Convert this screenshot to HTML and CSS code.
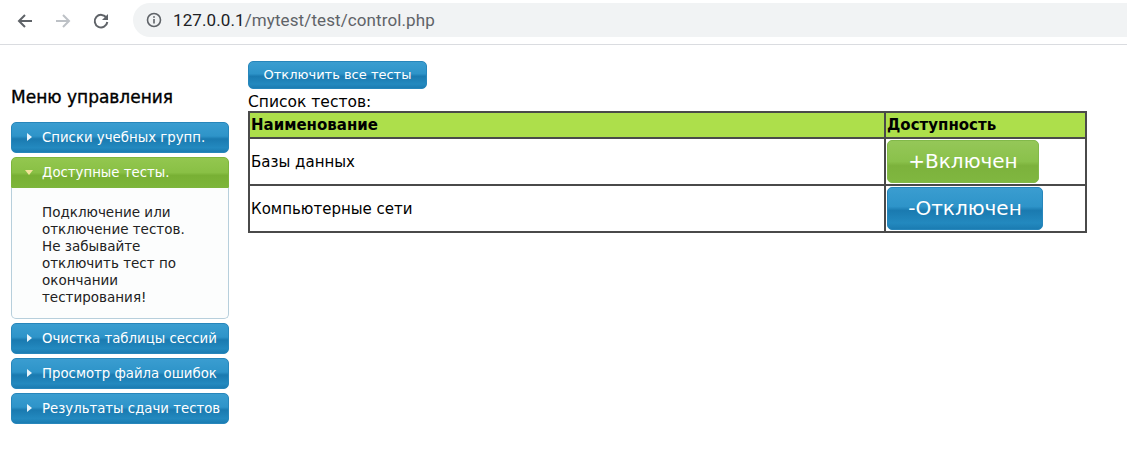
FILE: index.html
```html
<!DOCTYPE html>
<html lang="ru">
<head>
<meta charset="utf-8">
<title>control</title>
<link rel="stylesheet" href="styles.css">
</head>
<body>
<div class="chrome">
  <div class="nav">
    <svg class="ico" width="20" height="20" viewBox="0 0 20 20"><path d="M17 10H4M10 4l-6 6 6 6" fill="none" stroke="#5f6368" stroke-width="2"/></svg>
    <svg class="ico" width="20" height="20" viewBox="0 0 20 20"><path d="M3 10h13M10 4l6 6-6 6" fill="none" stroke="#bdc1c6" stroke-width="2"/></svg>
    <svg class="ico" width="20" height="20" viewBox="0 0 20 20"><path d="M15.5 7A6.3 6.3 0 1 0 16.3 11" fill="none" stroke="#5f6368" stroke-width="2"/><path d="M17 3v6h-6z" fill="#5f6368"/></svg>
  </div>
  <div class="omnibox">
    <svg class="info" width="16" height="16" viewBox="0 0 16 16"><circle cx="8" cy="8" r="6.5" fill="none" stroke="#5f6368" stroke-width="1.6"/><rect x="7.2" y="7" width="1.6" height="4.5" fill="#5f6368"/><rect x="7.2" y="4.2" width="1.6" height="1.6" fill="#5f6368"/></svg>
    <span class="url"><span class="host">127.0.0.1</span>/mytest/test/control.php</span>
  </div>
</div>
<div class="page">
  <aside class="sidebar">
    <h3 class="menu-title">Меню управления</h3>
    <div class="acc">
      <div class="acc-head"><span class="tri-r"></span>Списки учебных групп.</div>
      <div class="acc-head active"><span class="tri-d"></span>Доступные тесты.</div>
      <div class="acc-body">Подключение или отключение тестов. Не забывайте отключить тест по окончании тестирования!</div>
      <div class="acc-head"><span class="tri-r"></span>Очистка таблицы сессий</div>
      <div class="acc-head"><span class="tri-r"></span>Просмотр файла ошибок</div>
      <div class="acc-head"><span class="tri-r"></span>Результаты сдачи тестов</div>
    </div>
  </aside>
  <main class="main">
    <div class="btn btn-top">Отключить все тесты</div>
    <div class="caption">Список тестов:</div>
    <table class="tests">
      <tr class="head"><th class="c-name">Наименование</th><th class="c-av">Доступность</th></tr>
      <tr><td>Базы данных</td><td class="c-btn"><div class="btn btn-big btn-on">+Включен</div></td></tr>
      <tr><td>Компьютерные сети</td><td class="c-btn"><div class="btn btn-big btn-off">-Отключен</div></td></tr>
    </table>
  </main>
</div>
</body>
</html>
```
FILE: styles.css
```css
html, body { margin: 0; padding: 0; background: #fff; }
body { font-family: "DejaVu Sans", Verdana, sans-serif; color: #000; }

.chrome {
  height: 44px;
  border-bottom: 1px solid #dadce0;
  display: flex;
  align-items: center;
  background: #fff;
}
.nav { display: flex; align-items: center; gap: 18px; padding-left: 15px; width: 118px; height: 44px; margin-top: -2px; }
.ico { display: block; }
.omnibox {
  flex: 1;
  height: 34px;
  margin-top: -5px;
  background: #f1f3f4;
  border-radius: 17px 0 0 17px;
  display: flex;
  align-items: center;
  padding-left: 13px;
  gap: 11px;
}
.info { display: block; }
.url { font-family: "Roboto", "Liberation Sans", sans-serif; font-size: 17px; color: #5f6368; letter-spacing: 0.1px; }
.host { color: #202124; }

.page { display: flex; padding-left: 11px; gap: 19px; }
.sidebar { width: 218px; flex: none; }
.menu-title { font-size: 17px; font-weight: normal; -webkit-text-stroke: 0.35px #000; margin: 42px 0 15px 0; line-height: 20px; }

.acc { display: flex; flex-direction: column; gap: 4px; }
.acc-head {
  height: 31px;
  box-sizing: border-box;
  border-radius: 5px;
  color: #fff;
  font-size: 13.3px;
  padding-left: 15px;
  white-space: nowrap;
  background: linear-gradient(#3a9dd0 0%, #2e94c9 45%, #1a7ab0 55%, #2389bf 85%, #1b7cb2 100%);
  border: 1px solid #2786bb;
  line-height: 29px;
}
.acc-head.active {
  background: linear-gradient(#93c74f 0%, #89c045 50%, #78b034 60%, #7db63a 100%);
  border-color: #7db53d;
  border-radius: 5px 5px 0 0;
}
.tri-r, .tri-d { display: inline-block; vertical-align: middle; margin-right: 10px; }
.tri-r { width: 0; height: 0; border-left: 5px solid #e8f4fb; border-top: 4px solid transparent; border-bottom: 4px solid transparent; margin-top: -2px; }
.tri-d { width: 0; height: 0; border-top: 5px solid #f2e39a; border-left: 4px solid transparent; border-right: 4px solid transparent; margin-top: -2px; margin-left: -2px; margin-right: 9px; }
.acc-body {
  margin-top: -4px;
  height: 131px;
  box-sizing: border-box;
  border: 1px solid #b7cfdc;
  border-top: none;
  border-radius: 0 0 5px 5px;
  background: #fcfdfd;
  padding: 16px 30px 0 30px;
  font-size: 13.5px;
  line-height: 17px;
  color: #222;
}

.main { width: 839px; padding-top: 16px; }
.btn {
  color: #fff;
  text-align: center;
  border-radius: 5px;
  background: linear-gradient(#3a9dd0 0%, #2e94c9 45%, #1a7ab0 55%, #2389bf 85%, #1b7cb2 100%);
  border: 1px solid #2786bb;
  box-sizing: border-box;
}
.btn-top { width: 179px; height: 28px; line-height: 26px; font-size: 13px; }
.caption { font-size: 15.5px; line-height: 18px; margin-top: 4px; }
.tests { border-collapse: collapse; width: 839px; border: 2px solid #4a4a4a; }
.tests th, .tests td { border: 2px solid #4a4a4a; padding: 0 1px; text-align: left; font-size: 15px; }
.tests th { background: #addf4b; height: 23px; line-height: 23px; padding-top: 1px; }
.tests td { height: 45px; }
.c-name { width: 632px; }
.c-btn { padding: 0 1px !important; }
.btn-big { display: inline-block; height: 43px; line-height: 41px; font-size: 20px; vertical-align: middle; }
.btn-on {
  width: 152px;
  background: linear-gradient(#95c758 0%, #8ac14b 50%, #7cb23c 60%, #80b740 100%);
  border-color: #82b94a;
}
.btn-off { width: 156px; }
```
